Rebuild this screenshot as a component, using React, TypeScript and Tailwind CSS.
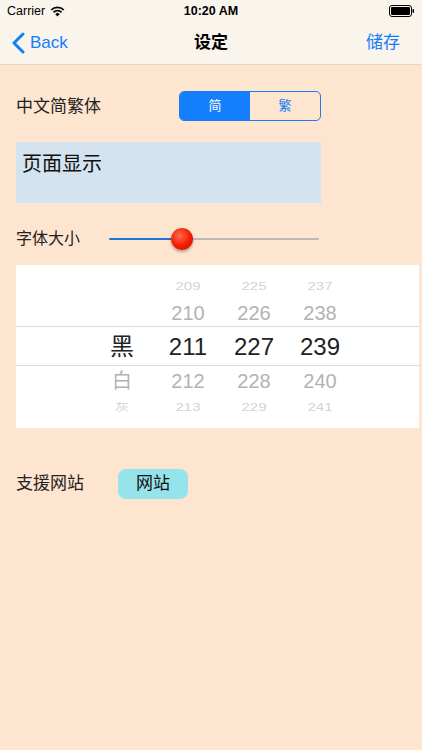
import React from 'react';

const font = { fontFamily: '"Helvetica Neue", "Liberation Sans", "Noto Sans CJK SC", sans-serif' };

const cols = [
  { x: 'w-[66px]', items: ['', '', '黑', '白', '灰'] },
  { x: 'w-[66px]', items: ['209', '210', '211', '212', '213'] },
  { x: 'w-[66px]', items: ['225', '226', '227', '228', '229'] },
  { x: 'w-[66px]', items: ['237', '238', '239', '240', '241'] },
];

const rowStyles = [
  'h-[26px] text-[15px] text-[#d4d4d4] scale-y-[0.7]',
  'h-[28px] text-[20px] text-[#b3b3b3]',
  'h-[40px] text-[24px] text-[#222]',
  'h-[28px] text-[20px] text-[#b3b3b3]',
  'h-[25px] text-[15px] text-[#d4d4d4] scale-y-[0.7]',
];

const App: React.FC = () => {
  return (
    <div className="w-[422px] h-[750px] bg-[#fee5cf] flex flex-col" style={font}>
      {/* Status + Nav */}
      <div className="bg-[#f9f4ec] border-b border-[#e6d6c4]">
        <div className="h-[20px] pt-[2px] flex items-center justify-between px-[7px] text-[12.5px] text-black">
          <div className="flex items-center gap-[5px]">
            <span>Carrier</span>
            <svg width="15" height="11" viewBox="0 0 15 11">
              <path d="M7.5 10.5 L5.2 8 A3.3 3.3 0 0 1 9.8 8 Z" fill="#000" />
              <path d="M3.5 6.3 A5.6 5.6 0 0 1 11.5 6.3" stroke="#000" strokeWidth="1.7" fill="none" />
              <path d="M1.2 4 A8.8 8.8 0 0 1 13.8 4" stroke="#000" strokeWidth="1.7" fill="none" />
            </svg>
          </div>
          <span className="font-semibold absolute left-1/2 -translate-x-1/2">10:20 AM</span>
          <svg width="26" height="12" viewBox="0 0 26 12">
            <rect x="0.5" y="0.5" width="22" height="11" rx="2.5" stroke="#000" fill="none" />
            <rect x="2" y="2" width="19" height="8" rx="1.2" fill="#000" />
            <rect x="23.5" y="4" width="1.5" height="4" rx="0.7" fill="#000" />
          </svg>
        </div>
        <div className="h-[44px] pt-[2px] flex items-center justify-between relative">
          <div className="flex items-center text-[#147efb] pl-[12px] text-[17px]">
            <svg width="13" height="22" viewBox="0 0 13 22" className="mr-[5px]">
              <path d="M11 2 L2 11 L11 20" stroke="#147efb" strokeWidth="3" fill="none" strokeLinecap="round" strokeLinejoin="round" />
            </svg>
            <span>Back</span>
          </div>
          <span className="absolute left-1/2 -translate-x-1/2 text-[17px] font-semibold text-black">设定</span>
          <span className="text-[17px] text-[#147efb] pr-[22px]">储存</span>
        </div>
      </div>

      {/* Content */}
      <div className="pl-[16px]">
        <div className="flex items-center mt-[26px] h-[30px]">
          <span className="text-[17px] text-[#222] w-[163px] pt-[2px]">中文简繁体</span>
          <div className="flex w-[142px] h-[30px] border border-[#147efb] rounded-[5px] overflow-hidden text-[13px]">
            <div className="flex-1 bg-[#147efb] text-white flex items-center justify-center">简</div>
            <div className="flex-1 text-[#147efb] flex items-center justify-center">繁</div>
          </div>
        </div>

        <div className="mt-[21px] w-[305px] h-[61px] bg-[#d3e3f0] pl-[6px] pt-[7px] text-[20px] text-[#111]">
          页面显示
        </div>

        <div className="flex items-center mt-[21px] h-[30px]">
          <span className="text-[16px] text-[#222] w-[93px]">字体大小</span>
          <div className="relative w-[210px] h-[30px] flex items-center">
            <div className="h-[2px] w-[73px] bg-[#1f73d8] rounded-l" />
            <div className="h-[2px] flex-1 bg-[#b9b9b9] rounded-r" />
            <div className="absolute left-[62px] top-[4px] w-[22px] h-[22px] rounded-full bg-[radial-gradient(circle_at_40%_35%,#ff6a50,#f21b00_55%,#c51200)] shadow-[0_2px_3px_rgba(0,0,0,0.3)]" />
          </div>
        </div>

        <div className="mt-[11px] w-[403px] h-[163px] bg-white relative flex justify-start pt-[8px]">
          <div className="absolute left-0 right-0 top-[61px] h-[40px] border-y border-[#dcdcdc]" />
          <div className="flex ml-[73px]">
            {cols.map((c, ci) => (
              <div key={ci} className={`${c.x} flex flex-col items-center`}>
                {c.items.map((t, ri) => (
                  <div key={ri} className={`${rowStyles[ri]} flex items-center justify-center leading-none`}>
                    {t}
                  </div>
                ))}
              </div>
            ))}
          </div>
        </div>

        <div className="flex items-center mt-[41px] h-[30px]">
          <span className="text-[17px] text-[#222] w-[102px]">支援网站</span>
          <div className="w-[70px] h-[30px] bg-[#95e4eb] rounded-[8px] flex items-center justify-center text-[17px] text-[#111]">
            网站
          </div>
        </div>
      </div>
    </div>
  );
};

export default App;
